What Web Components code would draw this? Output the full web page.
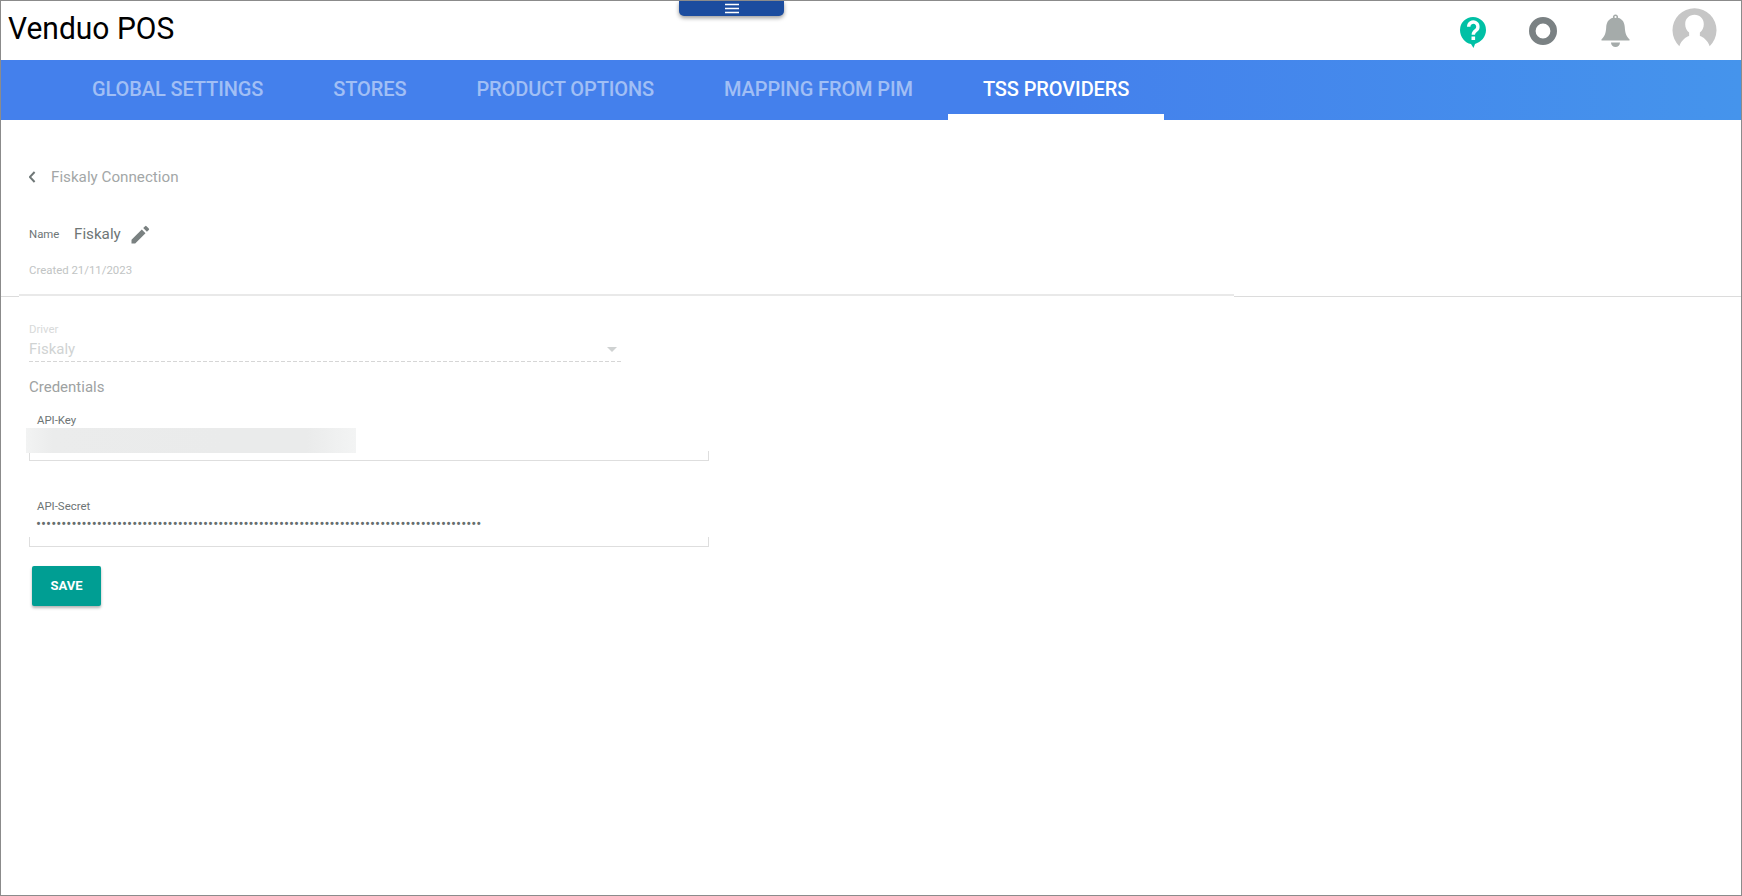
<!DOCTYPE html>
<html lang="en"><head><meta charset="utf-8"><title>Venduo POS</title>
<style>
html,body{margin:0;padding:0;height:100%;background:#fff;font-family:Roboto,"Liberation Sans",sans-serif;}
body{box-sizing:border-box;height:896px;overflow:hidden}
</style></head><body>
<app-shell></app-shell>
<script>
function def(name, html){
  customElements.define(name, class extends HTMLElement{
    constructor(){super();this.attachShadow({mode:'open'}).innerHTML=html;}
  });
}
def('top-bar',`<style>
:host{display:flex;align-items:center;height:59px;position:relative;background:#fff}
.wrap{flex:1;padding-left:7px;line-height:59px}
.title{display:inline-block;font-size:32px;color:#000;transform:scaleX(.937);transform-origin:0 50%}
.icons{display:flex;align-items:center}
.handle{position:absolute;left:678px;top:0;width:105px;height:15px;background:#1b4c9f;border-radius:0 0 5px 5px;box-shadow:0 2px 4px rgba(0,0,0,.4);display:flex;justify-content:center;align-items:center}
svg{display:block}
.q{margin:3px 43px 0 0}.c{margin-right:44px}.b{margin-right:42px}.u{margin-right:24px}
</style>
<div class="wrap"><span class="title">Venduo POS</span></div>
<div class="handle"><svg width="14" height="11" viewBox="0 0 14 11"><path d="M0 1.500h14M0 5.500h14M0 9.500h14" stroke="#fff" stroke-width="1.300"/></svg></div>
<div class="icons">
<svg class="q" width="26" height="31" viewBox="0 0 26 31"><path d="M13 0a13 13 0 0 1 13 13c0 7-5 12-11 14l-1.500 4-2.500-4C5 26 0 20 0 13A13 13 0 0 1 13 0z" fill="#00c0a5"/><path d="M8.700 9.700a4.600 4.600 0 1 1 7.300 3.700c-1.800 1.300-2.700 2.300-2.700 4.300" fill="none" stroke="#fff" stroke-width="3.400"/><rect x="11.500" y="19.500" width="3.600" height="3.500" fill="#fff"/></svg>
<svg class="c" width="28" height="28" viewBox="0 0 28 28"><circle cx="14" cy="14" r="10.700" fill="#fff" stroke="#7a8183" stroke-width="6.600"/></svg>
<svg class="b" width="29" height="34" viewBox="0 0 29 34"><path d="M14.500 0.500a2.600 2.600 0 0 1 2.500 3.300c4.800 1.300 6.600 5 6.800 9.700.3 5.500 1.500 9 4.700 11.700v1.300H.500v-1.300c3.200-2.700 4.400-6.200 4.700-11.700.2-4.700 2-8.400 6.800-9.700a2.600 2.600 0 0 1 2.500-3.300z" fill="#a5abaa"/><circle cx="14.500" cy="3" r="1.100" fill="#fff"/><path d="M10 28.500h9a4.500 4.500 0 0 1-9 0z" fill="#a5abaa"/></svg>
<svg class="u" width="45" height="45" viewBox="0 1.500 46 46"><path d="M7.500 40.500A22.500 22.500 0 1 1 38.500 40.500C36.500 34.500 31 30.700 28.500 30.200V26.500c2.500-1.800 4-5 4-8.500 0-5.500-4-9.500-9.500-9.500s-9.500 4-9.500 9.500c0 3.500 1.500 6.700 4 8.500v3.700C15 30.700 9.500 34.500 7.500 40.500z" fill="#c6c6c6"/></svg>
</div>`);
def('tab-item',`<style>
:host{display:flex;align-items:center;height:60px;box-sizing:border-box;padding:0 35px;font-size:20px;font-weight:500;letter-spacing:-.11px;color:rgba(255,255,255,.5);text-transform:uppercase;white-space:nowrap;border-bottom:6px solid transparent;}
:host([active]){color:#fff;border-bottom-color:#fff}
span{position:relative;top:2px}
</style><span><slot></slot></span>`);
def('tab-bar',`<style>
:host{display:flex;height:60px;padding-left:56px;background:linear-gradient(90deg,#4480ec 0%,#4480ec 60%,#4594ec 100%)}
</style><slot></slot>`);
def('page-header',`<style>
:host{display:block;height:177px;box-sizing:border-box;padding:47px 0 0 0;color:#9fa3a3;position:relative}
.back{display:flex;align-items:center;padding-left:28px;height:20px;font-size:15.200px;color:#a3a7a7}
.back svg{margin-right:14px}
.name{display:flex;align-items:center;padding-left:28px;margin-top:35px;height:24px}
.lbl{font-size:11.400px;color:#6e7676;width:45px}
.val{font-size:15.200px;color:#6e7676}
.name svg{margin-left:10px}
.created{padding-left:28px;margin-top:17px;font-size:11.400px;color:#c1c4c4;line-height:14px}
.rule{display:flex;position:absolute;left:0;right:0;bottom:0;align-items:flex-end}
.a{width:18px;height:1px;background:#dcdcdc}
.b{width:1215px;height:2px;background:#e9e9e9;margin-bottom:1px}
.c{flex:1;height:1px;background:#dcdcdc}
</style>
<div class="back"><svg width="8" height="12" viewBox="0 0 8 12"><path d="M5.600 1 .8 6l4.800 5" fill="none" stroke="#6f7777" stroke-width="2"/></svg>Fiskaly Connection</div>
<div class="name"><span class="lbl">Name</span><span class="val">Fiskaly</span><svg width="19" height="19" viewBox="0 0 19 19"><path d="M0.500 14.800V18.500H4.200L14.500 8.200 10.800 4.500zM17.800 4.900a1 1 0 0 0 0-1.400L15.500 1.200a1 1 0 0 0-1.400 0L12.200 3.100l3.700 3.700z" fill="#7a8181"/></svg></div>
<div class="created">Created 21/11/2023</div>
<div class="rule"><div class="a"></div><div class="b"></div><div class="c"></div></div>`);
def('driver-select',`<style>
:host{display:block;width:594px;margin-left:28px;padding-top:25px}
.l{font-size:11.400px;color:#d8dada;line-height:14px}
.v{display:flex;justify-content:space-between;align-items:center;height:26px;box-sizing:border-box;padding:0 6px 1px 0;font-size:15px;color:#d0d3d3;background:repeating-linear-gradient(90deg,#d6d6d6 0 4px,transparent 4px 6px) left bottom/100% 1px no-repeat}
svg{display:block;margin-top:1px}
</style><div class="l">Driver</div><div class="v"><span>Fiskaly</span><svg width="10" height="5" viewBox="0 0 10 5"><path d="M0 0h10L5 5z" fill="#cfd2d2"/></svg></div>`);
def('section-title',`<style>
:host{display:block;margin:16px 0 0 28px;font-size:15px;color:#9ea2a2;line-height:18px}
</style><slot></slot>`);
def('text-field',`<style>
:host{display:block;width:680px;margin-left:28px;position:relative}
.l{font-size:11.400px;color:#6d7474;line-height:14px;padding-left:8px}
.v{height:24px;padding:3px 0 0 7px;box-sizing:border-box;font-size:15px;color:#666e6e;line-height:17px;white-space:nowrap}
.line{height:10px;border:1px solid #dedede;border-top:0;box-sizing:border-box}
</style><div class="l"><slot name="label"></slot></div><div class="v"><slot></slot></div><div class="line"></div><slot name="over"></slot>`);
def('blur-mask',`<style>
:host{display:block;position:absolute;left:-3px;top:15px;width:330px;height:25px;background:linear-gradient(90deg,#f2f3f3 0%,#ebecec 8%,#eaebeb 60%,#eaebeb 85%,#f3f4f4 100%)}
</style>`);
def('save-button',`<style>
:host{display:flex;align-items:center;justify-content:center;width:69px;height:40px;box-sizing:border-box;padding-bottom:1px;margin:19px 0 0 31px;background:#009e93;border-radius:2px;color:#fff;font-size:13px;font-weight:700;box-shadow:0 2px 3px rgba(0,0,0,.3)}
</style><slot></slot>`);
def('app-shell',`<style>
:host{display:block;height:896px;box-sizing:border-box;border:1px solid #8b8b8b;background:#fff;overflow:hidden}
</style>
<top-bar></top-bar>
<tab-bar><tab-item>Global Settings</tab-item><tab-item>Stores</tab-item><tab-item>Product Options</tab-item><tab-item>Mapping from PIM</tab-item><tab-item active>TSS Providers</tab-item></tab-bar>
<page-header></page-header>
<driver-select></driver-select>
<section-title>Credentials</section-title>
<text-field style="margin-top:17px"><span slot="label">API-Key</span><blur-mask slot="over"></blur-mask></text-field>
<text-field style="margin-top:38px"><span slot="label">API-Secret</span>${'•'.repeat(88)}</text-field>
<save-button>SAVE</save-button>`);
</script>
</body></html>
